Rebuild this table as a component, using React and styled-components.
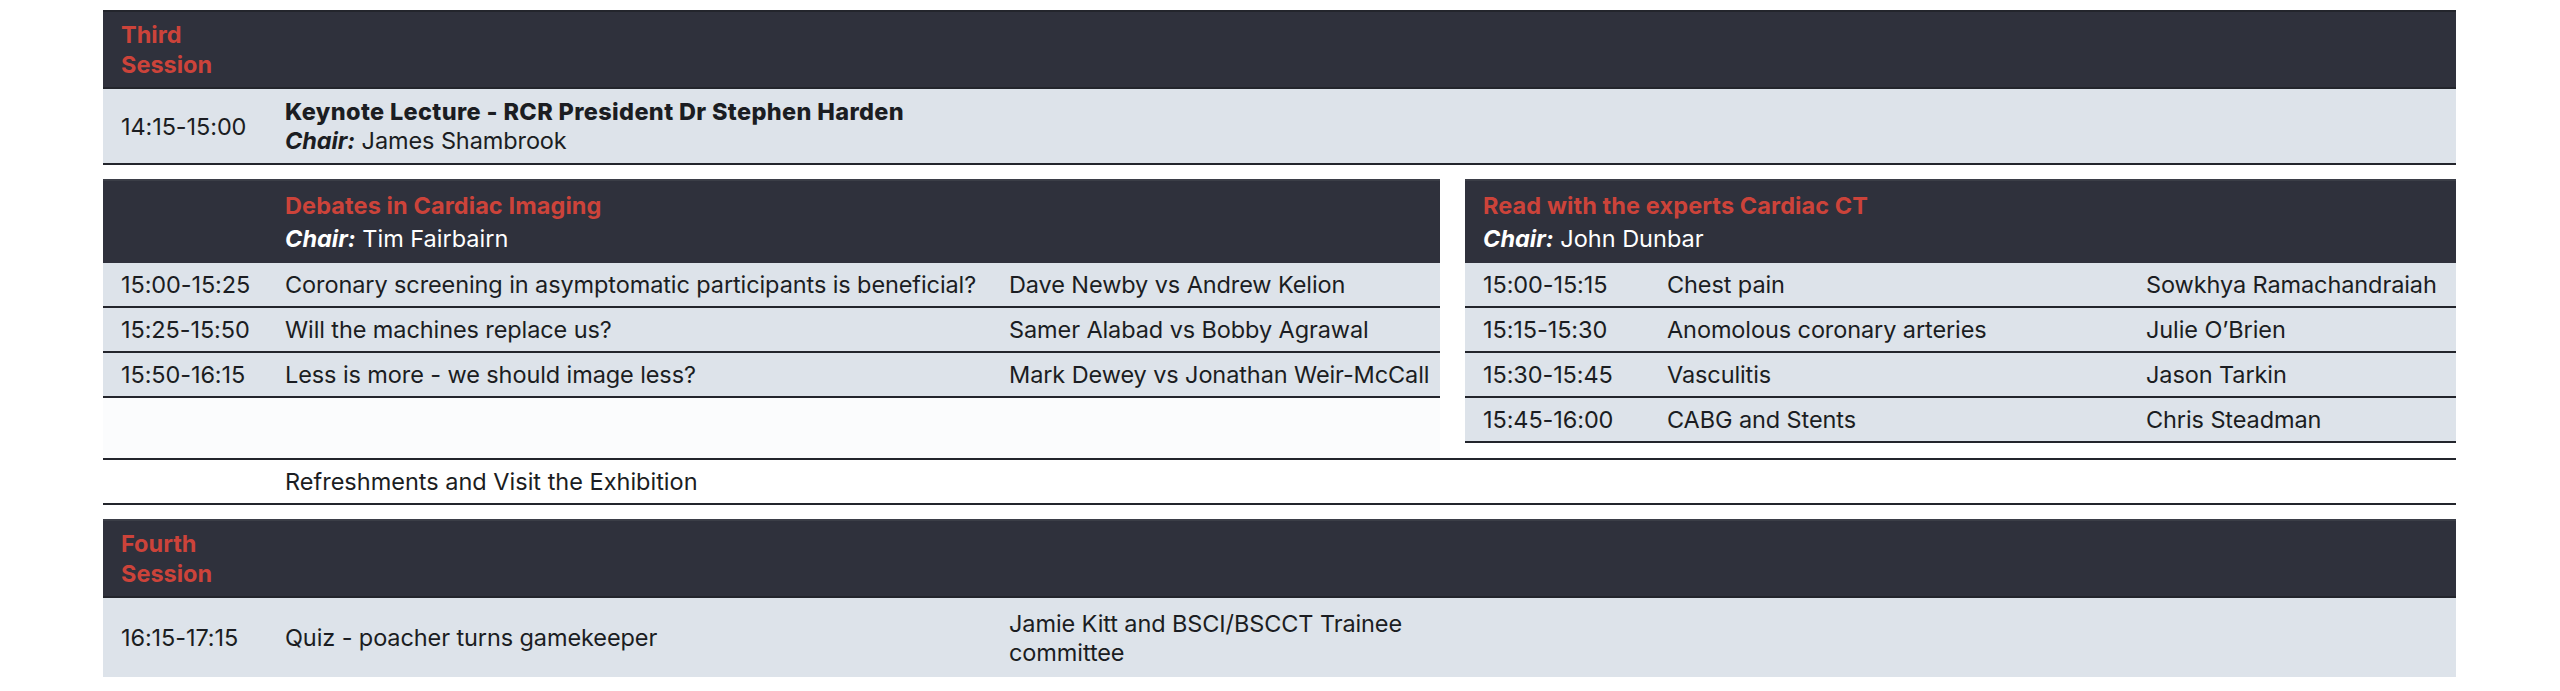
import styled, { createGlobalStyle } from 'styled-components'

const GlobalStyle = createGlobalStyle`
    body {
        margin: 0;
        background: #ffffff;
        font-family: Inter, "Noto Sans", "Liberation Sans", sans-serif;
        color: #1b1d22;
    }
`

const DARK = '#2f313c'
const LIGHT = '#dde3ea'
const LINE = '#23252c'
const RED = '#cc433a'

const Page = styled.div`
    width: 2353px;
    padding: 10px 0 0 103px;
    display: flex;
    flex-direction: column;
`
const SessionHead = styled.div`
    background-color: ${DARK};
    border-top: 2px solid ${p => p.$topLine || LINE};
    border-bottom: 2px solid ${LINE};
    height: 75px;
    box-sizing: content-box;
    padding: 0 18px;
    display: flex;
    align-items: center;
`
const SessionName = styled.div`
    color: ${RED};
    font-weight: 700;
    font-size: 23.5px;
    line-height: 30px;
    width: 80px;
`
const Row = styled.div`
    display: grid;
    grid-template-columns: ${p => p.$cols};
    align-items: center;
    background-color: ${p => p.$bg || LIGHT};
    border-bottom: ${p => (p.$noLine ? 'none' : `2px solid ${LINE}`)};
    height: ${p => p.$h}px;
    font-size: 23.5px;
    line-height: 29px;
    letter-spacing: -0.1px;
`
const Cell = styled.div`
    padding-left: 18px;
    white-space: ${p => (p.$wrap ? 'normal' : 'nowrap')};
`
const Title = styled.div`
    font-weight: 800;
    letter-spacing: 0.35px;
`
const ChairLabel = styled.span`
    font-weight: 700;
    font-style: italic;
`
const Split = styled.div`
    display: grid;
    grid-template-columns: 1337px 991px;
    column-gap: 25px;
    margin-top: 14px;
`
const SubTable = styled.div`
    display: flex;
    flex-direction: column;
    background-color: ${p => p.$fill || 'transparent'};
    padding-bottom: ${p => (p.$fill ? 0 : 15)}px;
`
const SubHead = styled.div`
    display: grid;
    grid-template-columns: ${p => p.$cols};
    background-color: ${DARK};
    border-top: 2px solid #3b3e47;
    height: 82px;
    align-content: center;
    color: #ffffff;
    font-size: 23.5px;
    line-height: 33px;
`
const SubTitle = styled.div`
    color: ${RED};
    font-weight: 700;
    letter-spacing: 0.1px;
`
const Break = styled.div`
    display: grid;
    grid-template-columns: 164px 1fr;
    align-items: center;
    border-top: 2px solid ${LINE};
    border-bottom: 2px solid ${LINE};
    height: 43px;
    font-size: 23.5px;
`
const Spacer = styled.div`
    height: 14px;
`

const LEFT_COLS = '164px 724px 1fr'
const RIGHT_COLS = '184px 479px 1fr'

const debates = [
    ['15:00-15:25', 'Coronary screening in asymptomatic participants is beneficial?', 'Dave Newby vs Andrew Kelion'],
    ['15:25-15:50', 'Will the machines replace us?', 'Samer Alabad vs Bobby Agrawal'],
    ['15:50-16:15', 'Less is more - we should image less?', 'Mark Dewey vs Jonathan Weir-McCall'],
]

const experts = [
    ['15:00-15:15', 'Chest pain', 'Sowkhya Ramachandraiah'],
    ['15:15-15:30', 'Anomolous coronary arteries', 'Julie O’Brien'],
    ['15:30-15:45', 'Vasculitis', 'Jason Tarkin'],
    ['15:45-16:00', 'CABG and Stents', 'Chris Steadman'],
]

const App = () => {
    return (
        <>
            <GlobalStyle />
            <Page>
                <SessionHead>
                    <SessionName>Third Session</SessionName>
                </SessionHead>
                <Row $cols={LEFT_COLS} $h={74}>
                    <Cell>14:15-15:00</Cell>
                    <Cell>
                        <Title>Keynote Lecture - RCR President Dr Stephen Harden</Title>
                        <div><ChairLabel>Chair:</ChairLabel> James Shambrook</div>
                    </Cell>
                </Row>

                <Split>
                    <SubTable $fill="#fbfcfd">
                        <SubHead $cols={LEFT_COLS}>
                            <Cell />
                            <Cell>
                                <SubTitle>Debates in Cardiac Imaging</SubTitle>
                                <div><ChairLabel>Chair:</ChairLabel> Tim Fairbairn</div>
                            </Cell>
                        </SubHead>
                        {debates.map(([time, topic, who]) => (
                            <Row key={time} $cols={LEFT_COLS} $h={43}>
                                <Cell>{time}</Cell>
                                <Cell>{topic}</Cell>
                                <Cell>{who}</Cell>
                            </Row>
                        ))}
                    </SubTable>
                    <SubTable>
                        <SubHead $cols="1fr">
                            <Cell>
                                <SubTitle>Read with the experts Cardiac CT</SubTitle>
                                <div><ChairLabel>Chair:</ChairLabel> John Dunbar</div>
                            </Cell>
                        </SubHead>
                        {experts.map(([time, topic, who]) => (
                            <Row key={time} $cols={RIGHT_COLS} $h={43}>
                                <Cell>{time}</Cell>
                                <Cell>{topic}</Cell>
                                <Cell>{who}</Cell>
                            </Row>
                        ))}
                    </SubTable>
                </Split>

                <Break>
                    <Cell />
                    <Cell>Refreshments and Visit the Exhibition</Cell>
                </Break>

                <Spacer />

                <SessionHead $topLine="#3b3e47">
                    <SessionName>Fourth Session</SessionName>
                </SessionHead>
                <Row $cols="164px 724px 449px 1fr" $h={79} $noLine>
                    <Cell>16:15-17:15</Cell>
                    <Cell>Quiz - poacher turns gamekeeper</Cell>
                    <Cell $wrap>Jamie Kitt and BSCI/BSCCT Trainee committee</Cell>
                </Row>
            </Page>
        </>
    )
}

export default App
